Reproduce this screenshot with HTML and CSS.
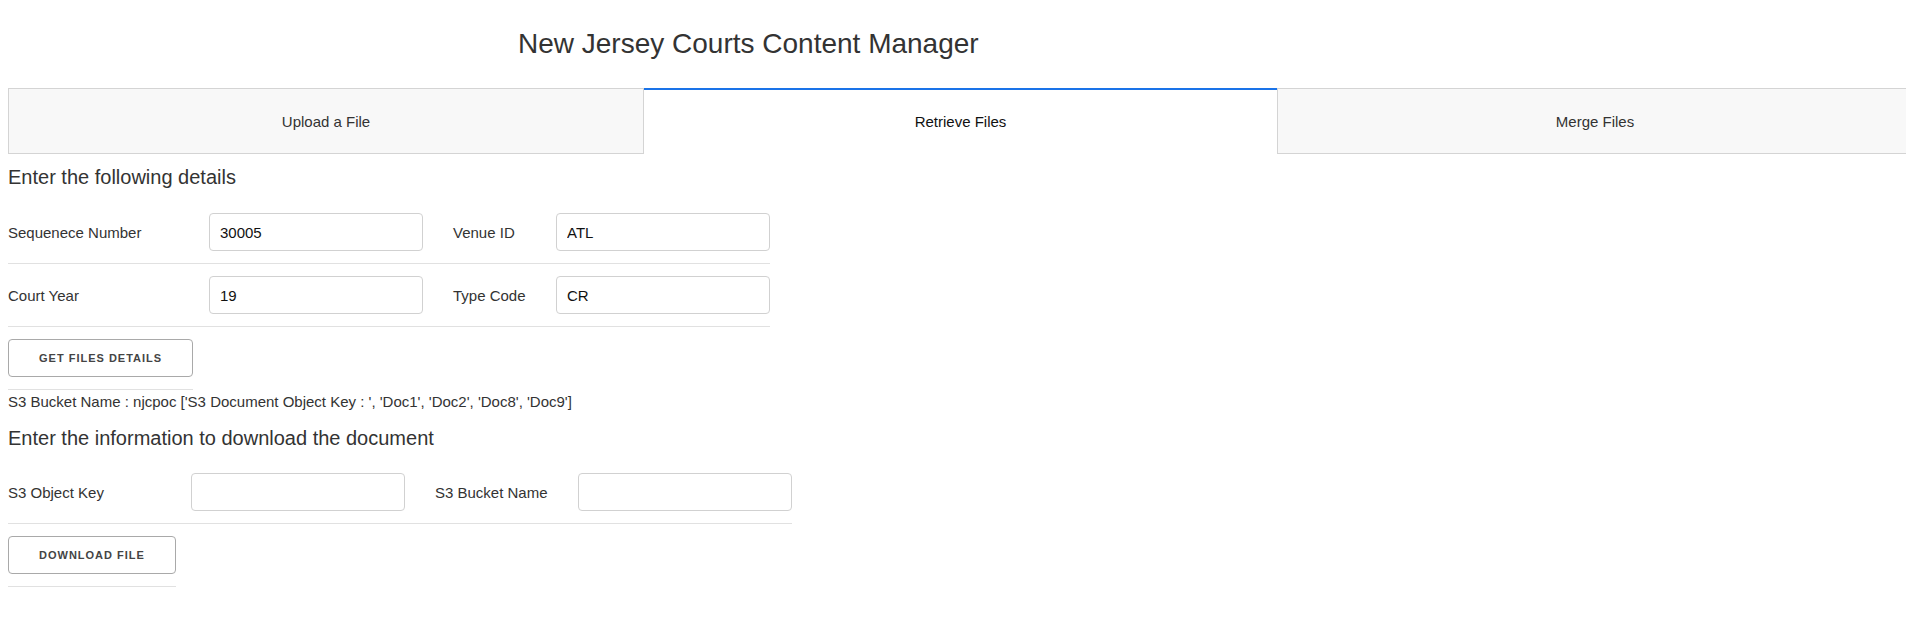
FILE: index.html
```html
<!DOCTYPE html>
<html lang="en">
<head>
<meta charset="utf-8">
<title>New Jersey Courts Content Manager</title>
<link rel="stylesheet" href="styles.css">
</head>
<body>
<div class="page">
  <h1 class="title">New Jersey Courts Content Manager</h1>
  <div class="tabs">
    <div class="tab tab-first">Upload a File</div>
    <div class="tab tab-active">Retrieve Files</div>
    <div class="tab tab-last">Merge Files</div>
  </div>
  <div class="panel">
    <h2 class="section-title section-first">Enter the following details</h2>
    <div class="form form-details">
      <div class="form-row">
        <label class="field-label">Sequenece Number</label>
        <input class="field-input" type="text" value="30005">
        <span class="spacer"></span>
        <label class="field-label">Venue ID</label>
        <input class="field-input" type="text" value="ATL">
      </div>
      <div class="form-row">
        <label class="field-label">Court Year</label>
        <input class="field-input" type="text" value="19">
        <span class="spacer"></span>
        <label class="field-label">Type Code</label>
        <input class="field-input" type="text" value="CR">
      </div>
    </div>
    <div class="action-row">
      <button class="btn" type="button">Get Files Details</button>
    </div>
    <p class="result">S3 Bucket Name : njcpoc ['S3 Document Object Key : ', 'Doc1', 'Doc2', 'Doc8', 'Doc9']</p>
    <h2 class="section-title section-second">Enter the information to download the document</h2>
    <div class="form form-download">
      <div class="form-row">
        <label class="field-label">S3 Object Key</label>
        <input class="field-input" type="text" value="">
        <span class="spacer"></span>
        <label class="field-label">S3 Bucket Name</label>
        <input class="field-input" type="text" value="">
      </div>
    </div>
    <div class="action-row">
      <button class="btn" type="button">Download File</button>
    </div>
  </div>
</div>
</body>
</html>
```

FILE: styles.css
```css
html, body {
  margin: 0;
  padding: 0;
  overflow: hidden;
  background: #ffffff;
}

body {
  font-family: "Liberation Sans", Arial, Helvetica, sans-serif;
  font-size: 15px;
  color: #333333;
}

.page {
  padding-left: 8px;
}

.title {
  margin: 28px 0 28px 0;
  padding-left: 510px;
  font-size: 28px;
  line-height: 32px;
  font-weight: 400;
  color: #333333;
  white-space: nowrap;
}

.tabs {
  display: flex;
  width: 1905px;
  height: 66px;
}

.tab {
  box-sizing: border-box;
  height: 66px;
  display: flex;
  align-items: center;
  justify-content: center;
  background: #f8f8f8;
  border: 1px solid #d4d4d4;
  color: #333333;
  font-size: 15px;
  line-height: 17px;
}

.tab-first {
  width: 636px;
}

.tab-active {
  width: 633px;
  background: #ffffff;
  border: none;
  border-top: 2px solid #1a73e8;
  color: #111111;
  padding-bottom: 1px;
}

.tab-last {
  width: 636px;
}

.panel {
  display: flex;
  flex-direction: column;
  align-items: flex-start;
}

.section-title {
  margin: 0;
  font-size: 20px;
  line-height: 23px;
  font-weight: 400;
  color: #333333;
}

.section-first {
  margin-top: 12px;
}

.section-second {
  margin-top: 17px;
}

.form {
  margin-top: 12px;
}

.section-second + .form {
  margin-top: 11px;
}

.form-row {
  display: grid;
  align-items: center;
  padding: 12px 0;
  border-bottom: 1px solid #e1e1e1;
}

.form-details .form-row {
  grid-template-columns: 201px 214px 30px 103px 214px;
}

.form-download .form-row {
  grid-template-columns: 183px 214px 30px 143px 214px;
}

.field-label {
  font-size: 15px;
  line-height: 17px;
  color: #333333;
  white-space: nowrap;
}

.field-input {
  box-sizing: border-box;
  width: 214px;
  height: 38px;
  margin: 0;
  padding: 6px 10px;
  border: 1px solid #d1d1d1;
  border-radius: 4px;
  background: #ffffff;
  font-family: "Liberation Sans", Arial, Helvetica, sans-serif;
  font-size: 15px;
  color: #111111;
  outline: none;
}

.action-row {
  padding: 12px 0;
  border-bottom: 1px solid #e1e1e1;
}

.btn {
  display: block;
  box-sizing: border-box;
  height: 38px;
  margin: 0;
  padding: 0 30px;
  border: 1px solid #a9a9a9;
  border-radius: 4px;
  background: transparent;
  font-family: "Liberation Sans", Arial, Helvetica, sans-serif;
  font-size: 11px;
  font-weight: 600;
  letter-spacing: 1px;
  text-transform: uppercase;
  color: #444444;
  line-height: 36px;
  white-space: nowrap;
  cursor: pointer;
}

.result {
  margin: 3px 0 0 0;
  font-size: 15px;
  line-height: 17px;
  color: #333333;
  white-space: nowrap;
}
```
